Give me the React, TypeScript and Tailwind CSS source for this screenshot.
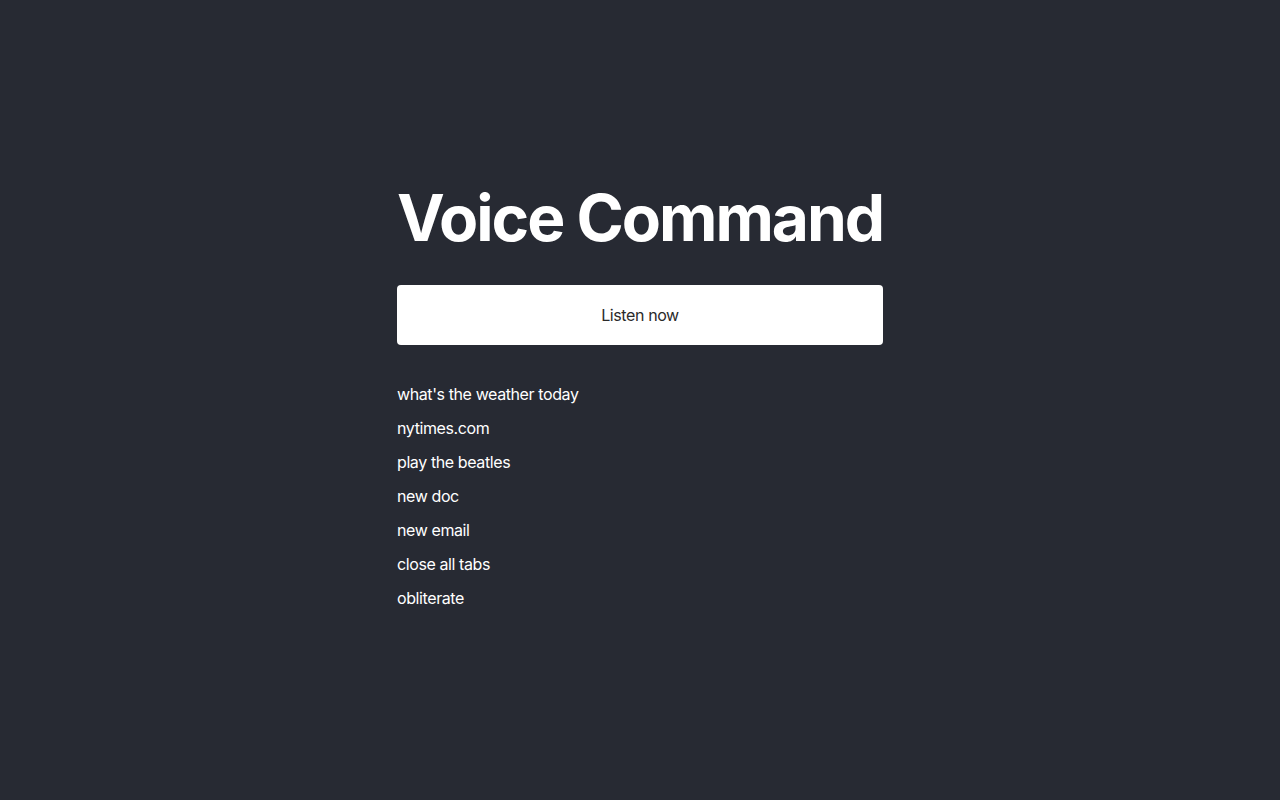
const commands = [
  "what's the weather today",
  "nytimes.com",
  "play the beatles",
  "new doc",
  "new email",
  "close all tabs",
  "obliterate",
];

export default function App() {
  return (
    <div className="min-h-screen bg-[#272a33] font-['Inter','Liberation_Sans',sans-serif] text-white">
      <div className="mx-auto flex w-[486px] flex-col pt-[186px]">
        <h1 className="whitespace-nowrap text-[64px] font-bold leading-[64px] tracking-[-2px]">Voice Command</h1>

        <button className="mt-[35px] h-[60px] w-full rounded-[4px] bg-white text-base tracking-[-0.4px] text-[#2a2a2a]">
          Listen now
        </button>

        <ul className="mt-[37px] flex flex-col gap-[10px]">
          {commands.map((c) => (
            <li key={c} className="text-base leading-6 tracking-[-0.4px]">
              {c}
            </li>
          ))}
        </ul>
      </div>
    </div>
  );
}
